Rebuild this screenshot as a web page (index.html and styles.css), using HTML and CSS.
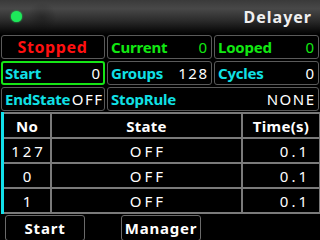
FILE: index.html
```html
<!DOCTYPE html>
<html>
<head>
<meta charset="utf-8">
<link rel="stylesheet" href="styles.css">
</head>
<body>
<div class="screen">
  <header class="top">
    <span class="dot"></span>
    <span class="shade"></span>
    <span class="title">Delayer</span>
  </header>
  <section class="panel">
    <div class="cell status">Stopped</div>
    <div class="cell"><span class="lbl green">Current</span><span class="val green">0</span></div>
    <div class="cell"><span class="lbl green">Looped</span><span class="val green">0</span></div>
    <div class="cell sel"><span class="lbl cyan">Start</span><span class="val">0</span></div>
    <div class="cell"><span class="lbl cyan">Groups</span><span class="val">128</span></div>
    <div class="cell"><span class="lbl cyan">Cycles</span><span class="val">0</span></div>
    <div class="cell tight"><span class="lbl cyan">EndState</span><span class="val">OFF</span></div>
    <div class="cell wide"><span class="lbl cyan">StopRule</span><span class="val">NONE</span></div>
  </section>
  <section class="tablewrap">
    <div class="bar"></div>
    <div class="table">
      <div class="th">No</div><div class="th">State</div><div class="th">Time(s)</div>
      <div class="td">127</div><div class="td">OFF</div><div class="td num">0.1</div>
      <div class="td">0</div><div class="td">OFF</div><div class="td num">0.1</div>
      <div class="td">1</div><div class="td">OFF</div><div class="td num">0.1</div>
    </div>
  </section>
  <footer class="buttons">
    <div class="btn">Start</div>
    <div class="btn">Manager</div>
  </footer>
</div>
</body>
</html>
```
FILE: styles.css
```css
* { box-sizing: border-box; }
html, body { margin: 0; padding: 0; background: #000; }
.screen {
  width: 320px; height: 240px; overflow: hidden; background: #000;
  font-family: "Noto Sans", "DejaVu Sans", sans-serif; color: #fff;
}
.top {
  height: 35px; display: flex; align-items: center; position: relative;
  background: linear-gradient(#3a3a3a 0%, #484848 25%, #2a2a2a 60%, #0a0a0a 90%, #000 100%);
  padding: 0 8px 2px 11px;
}
.dot {
  width: 11px; height: 11px; border-radius: 50%; background: #1ee85a;
  box-shadow: 0 0 2px #1ee85a; position: relative; z-index: 1;
}
.shade {
  position: absolute; left: 27px; top: 2px; width: 30px; height: 30px; border-radius: 50%;
  background: radial-gradient(circle, rgba(0,0,0,0.25), rgba(0,0,0,0) 70%);
}
.title {
  margin-left: auto; font-weight: bold; font-size: 16px; letter-spacing: 1px;
  color: #f0f0f0;
}
.panel {
  display: grid; grid-template-columns: 104px 105px 105px; grid-auto-rows: 24px;
  column-gap: 2px; row-gap: 2px; padding-left: 1px;
}
.cell {
  border: 1px solid #5a5a5a; border-radius: 3px; background: #000;
  display: flex; align-items: center; justify-content: space-between;
  padding: 0 4px 1px 3px; white-space: nowrap;
}
.cell.sel { border: 2px solid #16e616; padding: 0 3px 1px 2px; }
.cell.wide { grid-column: span 2; }
.cell.tight { padding-right: 2px; }
.status { justify-content: center; color: #ff1010; font-weight: bold; font-size: 16px; letter-spacing: 0.6px; }
.lbl { font-weight: bold; font-size: 15px; letter-spacing: -0.2px; }
.val { font-size: 15px; letter-spacing: 1.5px; margin-right: -1.5px; }
.green { color: #12e812; }
.cyan { color: #10e0e6; }
.tablewrap { display: flex; margin-top: 1px; height: 102px; padding-left: 1px; }
.bar { width: 3px; background: #12e0ea; }
.table {
  flex: 1; display: grid; grid-template-columns: 46px 189px 1fr;
  grid-auto-rows: 23px; background: #7a7a7a; gap: 2px; padding: 2px 1px 2px 0;
}
.th, .td { background: #000; display: flex; align-items: center; justify-content: center; font-size: 15px; }
.th { font-weight: bold; letter-spacing: 0.3px; }
.td { letter-spacing: 3px; padding-left: 3px; }
.td.num { justify-content: flex-end; padding-right: 9px; }
.buttons { display: flex; gap: 36px; padding-left: 5px; margin-top: 1px; }
.btn {
  width: 80px; height: 26px; border: 1px solid #6a6a6a; border-radius: 3px;
  display: flex; align-items: center; justify-content: center;
  font-weight: bold; font-size: 15px; letter-spacing: 0.8px;
}
```
